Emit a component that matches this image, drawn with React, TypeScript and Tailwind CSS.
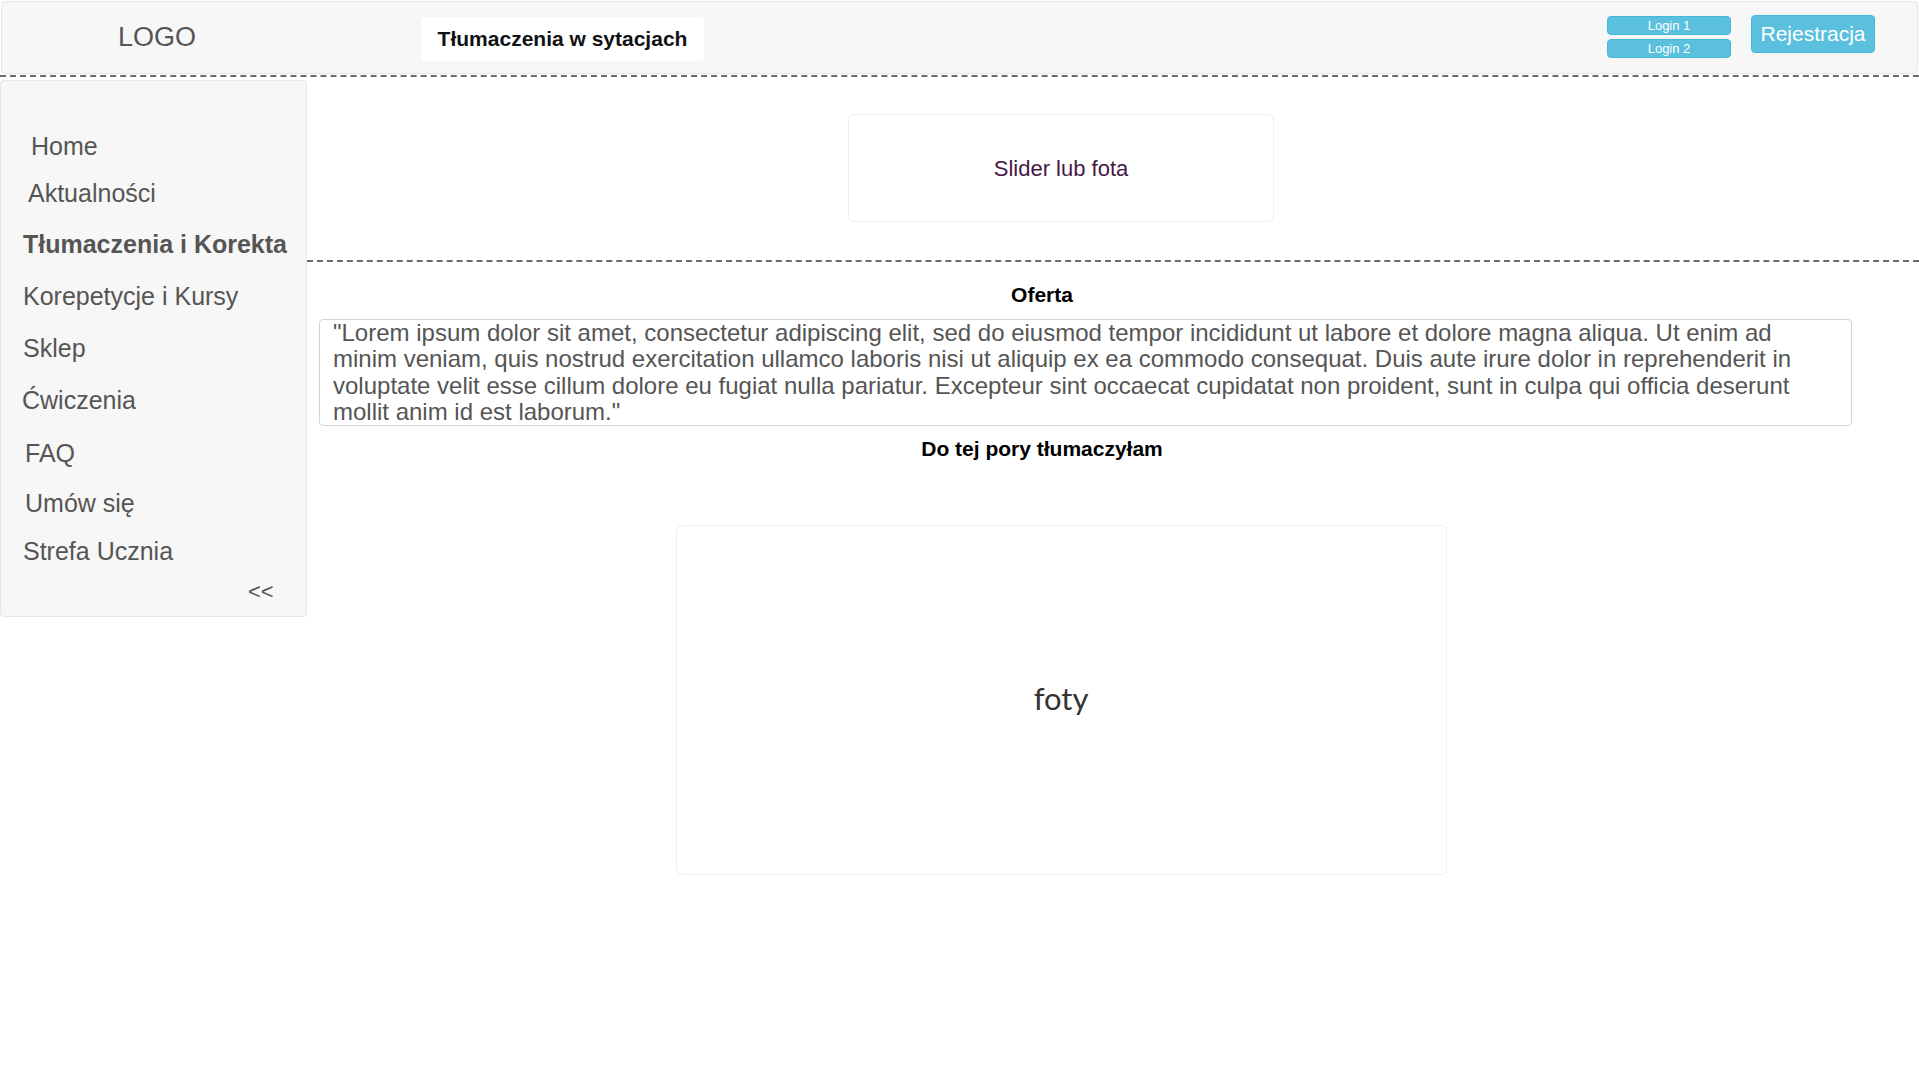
import React from "react";

const navItems: { label: string; pl: string; mt: string; bold?: boolean }[] = [
  { label: "Home", pl: "pl-[30px]", mt: "mt-0" },
  { label: "Aktualności", pl: "pl-[27px]", mt: "mt-[18px]" },
  { label: "Tłumaczenia i Korekta", pl: "pl-[22px]", mt: "mt-[22px]", bold: true },
  { label: "Korepetycje i Kursy", pl: "pl-[22px]", mt: "mt-[23px]" },
  { label: "Sklep", pl: "pl-[22px]", mt: "mt-[23px]" },
  { label: "Ćwiczenia", pl: "pl-[21px]", mt: "mt-[23px]" },
  { label: "FAQ", pl: "pl-[24px]", mt: "mt-[24px]" },
  { label: "Umów się", pl: "pl-[24px]", mt: "mt-[21px]" },
  { label: "Strefa Ucznia", pl: "pl-[22px]", mt: "mt-[19px]" },
];

export default function App() {
  return (
    <div className="min-h-screen w-full bg-white font-['Liberation_Sans',Arial,sans-serif] text-[#555]">
      {/* Header */}
      <div className="pt-[1px] px-[1px]">
        <div className="h-[73px] rounded-[4px] border border-[#e7e7e7] bg-[#f7f7f7] flex items-start">
          <div className="w-[310px] mt-[20px] text-center text-[27px] leading-[30px] text-[#555]">LOGO</div>
          <div className="ml-[109px] mt-[15px] h-[44px] w-[283px] rounded-[4px] bg-white flex items-center justify-center">
            <span className="text-[21px] font-bold text-[#111]">Tłumaczenia w sytacjach</span>
          </div>
          <div className="flex-1" />
          <div className="mt-[14px] flex flex-col gap-[4px]">
            <button className="h-[19px] w-[124px] rounded-[4px] border border-[#46b8da] bg-[#5bc0de] text-[13px] leading-[17px] text-white">
              Login 1
            </button>
            <button className="h-[19px] w-[124px] rounded-[4px] border border-[#46b8da] bg-[#5bc0de] text-[13px] leading-[17px] text-white">
              Login 2
            </button>
          </div>
          <button className="ml-[20px] mr-[42px] mt-[13px] h-[38px] w-[124px] rounded-[4px] border border-[#46b8da] bg-[#5bc0de] text-[21px] leading-[24px] text-white">
            Rejestracja
          </button>
        </div>
      </div>

      {/* dashed line */}
      <div className="mt-[1px] border-t-2 border-dashed border-[#6b6b6b]" />

      <div className="flex items-start">
        {/* Sidebar */}
        <aside className="mt-[3px] w-[307px] shrink-0 rounded-[4px] border border-[#e7e7e7] bg-[#f7f7f7] pt-[51px] pb-[12px]">
          {navItems.map((it) => (
            <div
              key={it.label}
              className={`${it.pl} ${it.mt} text-[25px] leading-[29px] ${it.bold ? "font-bold" : ""} text-[#555]`}
            >
              {it.label}
            </div>
          ))}
          <div className="mt-[13px] pl-[247px] text-[22px] leading-[25px] text-[#555]">&lt;&lt;</div>
        </aside>

        {/* Main */}
        <main className="flex-1 flex flex-col">
          <div className="w-[1508px] flex justify-center mt-[37px]">
            <div className="h-[108px] w-[426px] rounded-[6px] border border-[#efefef] flex items-center justify-center">
              <span className="text-[22px] text-[#471847]">Slider lub fota</span>
            </div>
          </div>

          <div className="mt-[38px] border-t-2 border-dashed border-[#6b6b6b]" />

          <div className="mt-[21px] w-[1470px] text-center text-[21px] leading-[24px] font-bold text-black">Oferta</div>

          <div className="mt-[12px] ml-[12px] w-[1533px] rounded-[4px] border border-[#d4d4d4] pl-[13px] pr-[12px] text-[24px] leading-[26.3px] text-[#555]">
            "Lorem ipsum dolor sit amet, consectetur adipiscing elit, sed do eiusmod tempor incididunt ut labore et dolore magna aliqua. Ut enim ad minim veniam, quis nostrud exercitation ullamco laboris nisi ut aliquip ex ea commodo consequat. Duis aute irure dolor in reprehenderit in voluptate velit esse cillum dolore eu fugiat nulla pariatur. Excepteur sint occaecat cupidatat non proident, sunt in culpa qui officia deserunt mollit anim id est laborum."
          </div>

          <div className="mt-[11px] w-[1470px] text-center text-[21px] leading-[24px] font-bold text-black">
            Do tej pory tłumaczyłam
          </div>

          <div className="w-[1508px] flex justify-center mt-[64px]">
            <div className="h-[350px] w-[771px] rounded-[6px] border border-[#efefef] flex items-center justify-center pb-[4px]">
              <span className="font-['Lato',sans-serif] text-[31px] text-[#333]">foty</span>
            </div>
          </div>
        </main>
      </div>
    </div>
  );
}
